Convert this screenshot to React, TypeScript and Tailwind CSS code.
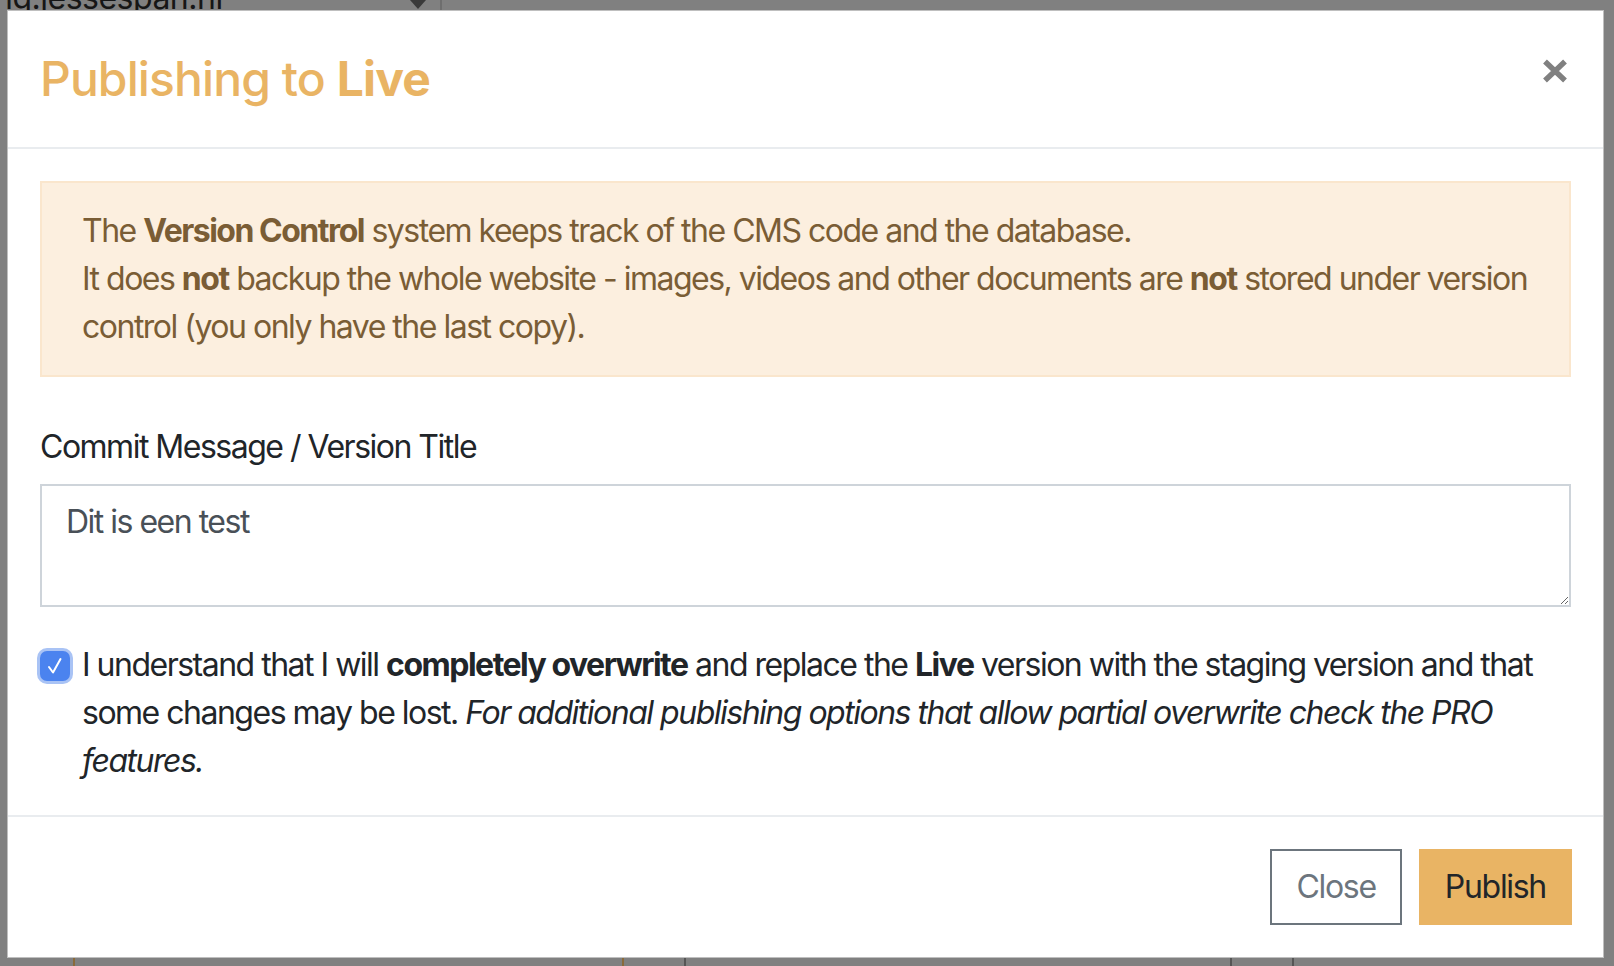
import React from "react";

const CloseIcon = () => (
  <svg width="26" height="24" viewBox="0 0 26 24" aria-hidden="true">
    <path d="M3 2.5 L23 21.5 M23 2.5 L3 21.5" stroke="#808080" strokeWidth="5.5" fill="none" />
  </svg>
);

const CheckBox = () => (
  <div className="mt-[10px] flex h-[30px] w-[30px] shrink-0 items-center justify-center rounded-[7px] bg-[#4b83ef] ring-[3px] ring-[#a9c3f5]">
    <svg width="22" height="22" viewBox="0 0 22 22" aria-hidden="true">
      <path d="M5 12 L9 17.5 L16.5 4" stroke="white" strokeWidth="2" fill="none" strokeLinecap="round" strokeLinejoin="round" />
    </svg>
  </div>
);

const PublishModal = () => {
  return (
    <div className="w-[1597px] border border-[rgba(0,0,0,0.25)] bg-white">
      {/* header */}
      <div className="flex items-start justify-between border-b-2 border-[#e9ecef] p-[32px]">
        <h4 className="text-[48px] leading-[72px] font-medium text-[#e9b464] tracking-[-0.9px]">
          Publishing to <strong className="font-bold">Live</strong>
        </h4>
        <button className="mr-[3px] mt-[16px]">
          <CloseIcon />
        </button>
      </div>

      {/* body */}
      <div className="px-[32px] pt-[32px] pb-[30px] text-[32px] leading-[48px] tracking-[-1.5px]">
        <div className="border-2 border-[#fae6cd] bg-[#fcefdf] py-[24px] pl-[40px] pr-[26px] text-[#7a5d35]">
          The <strong className="font-bold">Version Control</strong> system keeps track of the CMS code and the database.
          <br />
          It does <strong className="font-bold">not</strong> backup the whole website - images, videos and other documents are{" "}
          <strong className="font-bold">not</strong> stored under version control (you only have the last copy).
        </div>

        <div className="mt-[46px] mb-[34px]">
          <label className="mb-[13px] block text-[#212529]">Commit Message / Version Title</label>
          <textarea
            rows={2}
            defaultValue="Dit is een test"
            className="block h-[123px] w-full resize-y rounded-none border-2 border-[#ced4da] bg-white px-[24px] py-[12px] text-[#495057] outline-none"
          />
        </div>

        <div className="flex gap-[12px] text-[#212529]">
          <CheckBox />
          <p>
            I understand that I will <strong className="font-bold">completely overwrite</strong> and replace the{" "}
            <strong className="font-bold">Live</strong> version with the staging version and that some changes may be lost.{" "}
            <em>For additional publishing options that allow partial overwrite check the PRO features.</em>
          </p>
        </div>
      </div>

      {/* footer */}
      <div className="flex justify-end gap-[17px] border-t-2 border-[#e9ecef] p-[32px] pr-[31px] text-[32px] leading-[48px] tracking-[-1.3px]">
        <button className="border-2 border-[#6c757d] bg-white px-[24px] py-[12px] text-[#6c757d]">Close</button>
        <button className="border-2 border-[#e9b464] bg-[#e9b464] px-[24px] py-[12px] text-[#212529]">Publish</button>
      </div>
    </div>
  );
};

export default function App() {
  return (
    <div className="flex h-[966px] w-[1614px] flex-col overflow-hidden bg-[#808080] font-['Inter','Liberation_Sans',sans-serif]">
      {/* page behind the backdrop, only a sliver shows above the dialog */}
      <div className="flex h-[10px] w-[442px] items-end justify-between overflow-hidden border-r-2 border-[#6e6e6e]">
        <span className="ml-[-6px] mb-[-4px] text-[32px] leading-[32px] tracking-[-0.5px] text-[#161616]">ng.jessespan.nl</span>
        <span className="mb-[1px] mr-[14px] h-0 w-0 border-x-[8px] border-t-[9px] border-x-transparent border-t-[#3a3a3a]" />
      </div>

      <div className="pl-[7px]">
        <PublishModal />
      </div>

      <div className="flex h-[8px]">
        <div className="w-[73px]" />
        <div className="w-[549px] border-l-2 border-[#8a6a3a]" />
        <div className="w-[62px] border-l-2 border-[#8a6a3a]" />
        <div className="w-[546px] border-l-2 border-[#555]" />
        <div className="w-[62px] border-l-2 border-[#555]" />
        <div className="border-l-2 border-[#555]" />
      </div>
    </div>
  );
}
